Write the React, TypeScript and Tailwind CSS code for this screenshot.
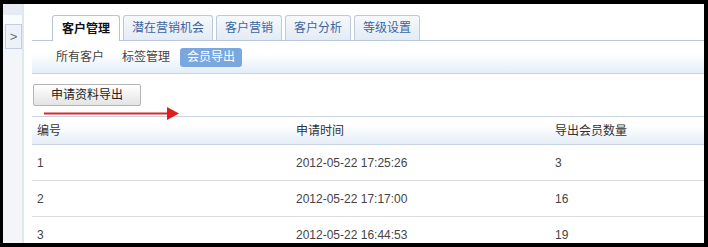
import React from "react";

const font = { fontFamily: '"Liberation Sans", "Noto Sans CJK SC", sans-serif' };

const tabs = ["客户管理", "潜在营销机会", "客户营销", "客户分析", "等级设置"];
const rows = [
  ["1", "2012-05-22 17:25:26", "3"],
  ["2", "2012-05-22 17:17:00", "16"],
  ["3", "2012-05-22 16:44:53", "19"],
];

export default function App() {
  return (
    <div
      className="w-[708px] h-[247px] bg-black pt-[4px] pl-[3px] pr-[4px] pb-[4px] overflow-hidden"
      style={font}
    >
      <div className="relative flex h-full bg-white overflow-hidden text-[12px] text-[#333]">
        {/* sidebar */}
        <div className="w-[21px] shrink-0 flex flex-col bg-[#f3f5f9] border-r-2 border-[#dfe7f2]">
          <div className="h-[11px] shrink-0 bg-[#e7ecf4]" />
          <div className="h-[9px] shrink-0 bg-[#fafbfd]" />
          <div className="ml-[2px] h-[25px] shrink-0 flex items-center justify-center bg-[#eef2f8] border border-[#c3cddb] text-[#5a6f8c] text-[13px]">
            &gt;
          </div>
        </div>

        {/* main */}
        <div className="flex-1 flex flex-col pl-[8px]">
          {/* tab bar */}
          <div className="shrink-0 flex items-end gap-[3px] pt-[11px] pl-[20px] border-b border-[#b9c7d9] h-[37px]">
            {tabs.map((t, i) =>
              i === 0 ? (
                <div
                  key={t}
                  className="h-[26px] -mb-px px-[9px] flex items-center bg-white border border-b-0 border-[#b6c4d8] rounded-t-[3px] font-bold text-[#111]"
                >
                  {t}
                </div>
              ) : (
                <div
                  key={t}
                  className="h-[25px] px-[8px] flex items-center bg-gradient-to-b from-[#f6f9fc] to-[#e4ebf4] border border-b-0 border-[#bccadc] rounded-t-[3px] text-[#3a66a0]"
                >
                  {t}
                </div>
              )
            )}
          </div>

          {/* sub tabs */}
          <div className="shrink-0 h-[33px] flex items-center pl-[17px] bg-gradient-to-b from-white from-40% to-[#e4eef9] border-b border-[#c6d6e8]">
            <div className="px-[7px] text-[#444]">所有客户</div>
            <div className="ml-[4px] px-[7px] text-[#444]">标签管理</div>
            <div className="ml-[3px] h-[19px] px-[7px] flex items-center rounded-[3px] bg-[#7aa7df] text-white">
              会员导出
            </div>
          </div>

          {/* button */}
          <div className="shrink-0 pt-[10px] pb-[10px] pl-[1px]">
            <div className="w-[108px] h-[22px] flex items-center justify-center border border-[#b4b4b4] rounded-[2px] bg-gradient-to-b from-white to-[#e4e4e4] text-[#222]">
              申请资料导出
            </div>
          </div>

          {/* table */}
          <div className="shrink-0 flex flex-col">
            <div className="shrink-0 grid grid-cols-[259px_259px_1fr] h-[29px] items-center border-t border-b border-[#c8d4e2] bg-gradient-to-b from-white from-30% to-[#e5edf7] text-[#333]">
              <div className="pl-[5px]">编号</div>
              <div className="pl-[5px]">申请时间</div>
              <div className="pl-[5px]">导出会员数量</div>
            </div>
            {rows.map((r) => (
              <div
                key={r[0]}
                className="grid grid-cols-[259px_259px_1fr] h-[36px] shrink-0 items-center border-b border-[#dcdcdc] text-[#444]"
              >
                <div className="pl-[5px]">{r[0]}</div>
                <div className="pl-[5px]">{r[1]}</div>
                <div className="pl-[5px]">{r[2]}</div>
              </div>
            ))}
          </div>
        </div>

        {/* red annotation arrow */}
        <svg
          className="absolute left-[40px] top-[101px]"
          width="140"
          height="16"
          viewBox="0 0 140 16"
        >
          <line x1="1" y1="8.5" x2="126" y2="8.5" stroke="#d42a2a" strokeWidth="2" />
          <polygon points="124,2 136,8.5 124,15" fill="#e01e1e" />
        </svg>
      </div>
    </div>
  );
}
